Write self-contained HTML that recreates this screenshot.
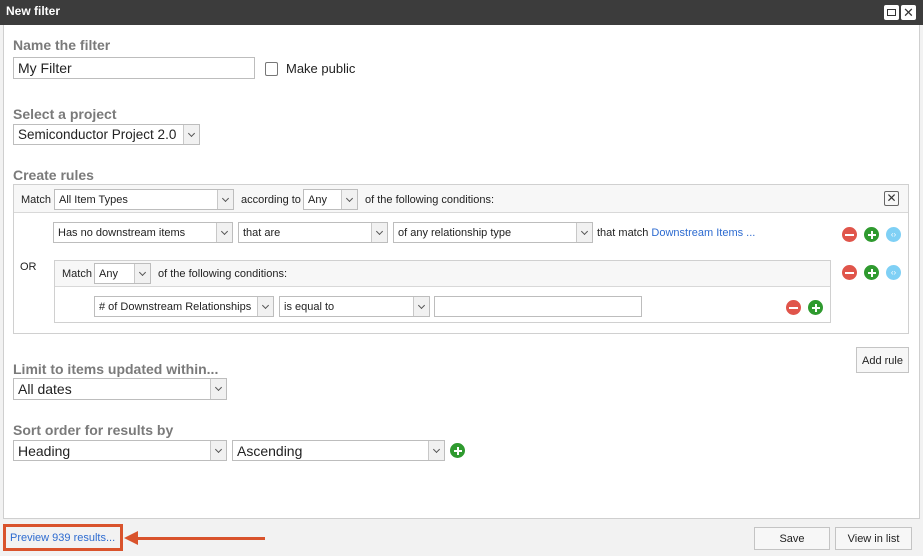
<!DOCTYPE html>
<html><head><meta charset="utf-8"><style>
*{box-sizing:border-box;margin:0;padding:0}
body{width:923px;height:556px;background:#f2f2f2;font-family:"Liberation Sans",Arial,sans-serif;position:relative;overflow:hidden;color:#222}
.a{position:absolute}
.bar{left:0;top:0;width:923px;height:25px;background:#3c3c3c;color:#fff;font-weight:bold;font-size:12px;line-height:22px;padding-left:6px}
.panel{left:3px;top:25px;width:917px;height:494px;background:#fff;border:1px solid #cfcfcf;border-top:none}
.lbl{font-size:14px;font-weight:bold;color:#7a7a7a}
.sel{position:absolute;border:1px solid #bdbdbd;background:#fff;font-size:11px;padding-left:4px;white-space:nowrap;overflow:hidden}
.sel i{position:absolute;right:0;top:0;bottom:0;width:16px;border-left:1px solid #c8c8c8;background:#f1f1f1}
.sel i:after{content:"";position:absolute;left:5px;top:50%;margin-top:-4px;width:4px;height:4px;border-right:1.5px solid #555;border-bottom:1.5px solid #555;transform:rotate(45deg)}
.t{position:absolute;font-size:11px;white-space:nowrap}
.ic{position:absolute;width:15px;height:15px;border-radius:50%}
.r{background:#e0554b}.r:after{content:"";position:absolute;left:3px;top:6.5px;width:9px;height:2px;background:#fff}
.g{background:#2f9a2f}.g:before{content:"";position:absolute;left:3.5px;top:6.5px;width:8px;height:2px;background:#fff}.g:after{content:"";position:absolute;left:6.5px;top:3.5px;width:2px;height:8px;background:#fff}
.b{background:#7fd0f5;color:#fff;font-size:8px;text-align:center;line-height:15px}
.btn{position:absolute;border:1px solid #c4c4c4;background:#f7f7f7;font-size:11px;text-align:center}
</style></head><body>
<div class="a bar">New filter</div>
<div class="a" style="left:884px;top:5px;width:15px;height:15px;background:#fff;border-radius:2px"><div class="a" style="left:3px;top:4px;width:9px;height:7px;border:1.5px solid #333"></div></div>
<div class="a" style="left:901px;top:5px;width:15px;height:15px;background:#fff;border-radius:2px;text-align:center;font-size:13px;line-height:15px;color:#333">✕</div>
<div class="a panel"></div>

<div class="a lbl" style="left:13px;top:37px">Name the filter</div>
<div class="a" style="left:13px;top:57px;width:242px;height:22px;border:1px solid #bdbdbd;font-size:14px;line-height:21px;padding-left:4px">My Filter</div>
<div class="a" style="left:265px;top:62px;width:13px;height:14px;border:1px solid #777;border-radius:2px"></div>
<div class="a" style="left:286px;top:61px;font-size:13px">Make public</div>

<div class="a lbl" style="left:13px;top:106px">Select a project</div>
<div class="sel" style="left:13px;top:124px;width:187px;height:21px;font-size:13.5px;line-height:20px">Semiconductor Project 2.0<i></i></div>

<div class="a lbl" style="left:13px;top:167px">Create rules</div>
<div class="a" style="left:13px;top:184px;width:896px;height:150px;border:1px solid #d0d0d0"></div>
<div class="a" style="left:14px;top:185px;width:894px;height:28px;background:#f7f7f7;border-bottom:1px solid #d8d8d8"></div>
<div class="t" style="left:21px;top:194px">Match</div>
<div class="sel" style="left:54px;top:189px;width:180px;height:21px;line-height:21px">All Item Types<i></i></div>
<div class="t" style="left:241px;top:194px">according to</div>
<div class="sel" style="left:303px;top:189px;width:55px;height:21px;line-height:21px">Any<i></i></div>
<div class="t" style="left:365px;top:194px">of the following conditions:</div>
<div class="a" style="left:884px;top:191px;width:15px;height:15px;border:1px solid #666;border-radius:2px;text-align:center;font-size:12px;line-height:13px;color:#333">✕</div>

<div class="sel" style="left:53px;top:222px;width:180px;height:21px;line-height:21px">Has no downstream items<i></i></div>
<div class="sel" style="left:238px;top:222px;width:150px;height:21px;line-height:21px">that are<i></i></div>
<div class="sel" style="left:393px;top:222px;width:200px;height:21px;line-height:21px">of any relationship type<i></i></div>
<div class="t" style="left:597px;top:227px">that match <span style="color:#2d6bd0">Downstream Items ...</span></div>
<div class="ic r" style="left:842px;top:227px"></div><div class="ic g" style="left:864px;top:227px"></div><div class="ic b" style="left:886px;top:227px">‹›</div>

<div class="t" style="left:20px;top:261px">OR</div>
<div class="a" style="left:54px;top:260px;width:777px;height:63px;border:1px solid #d0d0d0"></div>
<div class="a" style="left:55px;top:261px;width:775px;height:26px;background:#f7f7f7;border-bottom:1px solid #d8d8d8"></div>
<div class="t" style="left:62px;top:268px">Match</div>
<div class="sel" style="left:94px;top:263px;width:57px;height:21px;line-height:21px">Any<i></i></div>
<div class="t" style="left:158px;top:268px">of the following conditions:</div>
<div class="ic r" style="left:842px;top:265px"></div><div class="ic g" style="left:864px;top:265px"></div><div class="ic b" style="left:886px;top:265px">‹›</div>

<div class="sel" style="left:94px;top:296px;width:180px;height:21px;line-height:21px"># of Downstream Relationships<i></i></div>
<div class="sel" style="left:279px;top:296px;width:151px;height:21px;line-height:21px">is equal to<i></i></div>
<div class="a" style="left:434px;top:296px;width:208px;height:21px;border:1px solid #bdbdbd"></div>
<div class="ic r" style="left:786px;top:300px"></div><div class="ic g" style="left:808px;top:300px"></div>

<div class="btn" style="left:856px;top:347px;width:53px;height:26px;line-height:26px">Add rule</div>

<div class="a lbl" style="left:13px;top:361px">Limit to items updated within...</div>
<div class="sel" style="left:13px;top:378px;width:214px;height:22px;font-size:14px;line-height:21px">All dates<i></i></div>

<div class="a lbl" style="left:13px;top:422px">Sort order for results by</div>
<div class="sel" style="left:13px;top:440px;width:214px;height:21px;font-size:14px;line-height:20px">Heading<i></i></div>
<div class="sel" style="left:232px;top:440px;width:213px;height:21px;font-size:14px;line-height:20px">Ascending<i></i></div>
<div class="ic g" style="left:450px;top:443px"></div>

<div class="a" style="left:3px;top:524px;width:120px;height:27px;border:3px solid #d9532c"></div>
<div class="t" style="left:10px;top:532px;color:#2d6bd0">Preview 939 results...</div>
<div class="a" style="left:136px;top:537px;width:129px;height:3px;background:#d9532c"></div>
<div class="a" style="left:124px;top:531px;width:0;height:0;border-top:7px solid transparent;border-bottom:7px solid transparent;border-right:14px solid #d9532c"></div>

<div class="btn" style="left:754px;top:527px;width:76px;height:23px;line-height:23px">Save</div>
<div class="btn" style="left:835px;top:527px;width:77px;height:23px;line-height:23px">View in list</div>
</body></html>
